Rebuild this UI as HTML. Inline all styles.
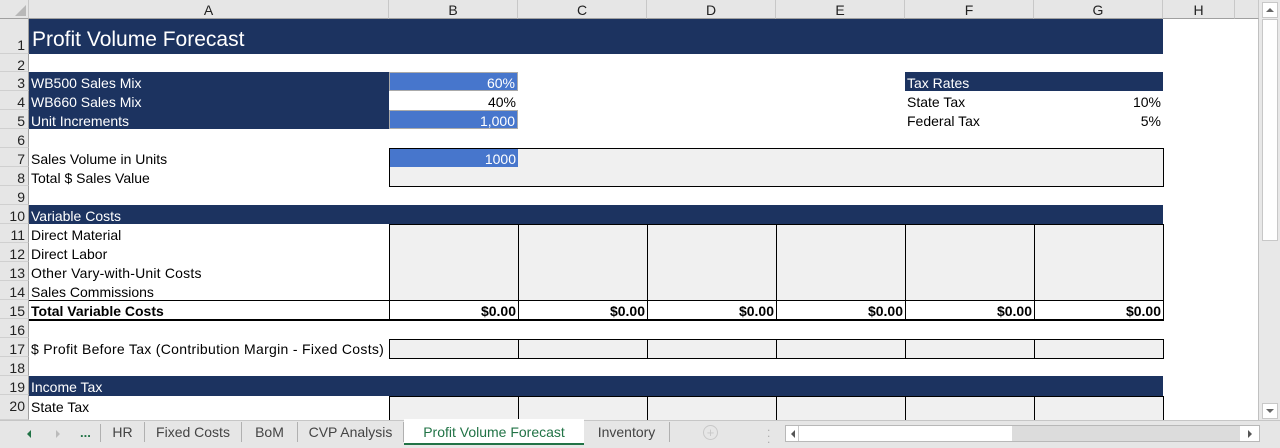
<!DOCTYPE html>
<html><head><meta charset="utf-8"><style>
*{margin:0;padding:0;box-sizing:border-box}
body{width:1280px;height:448px;overflow:hidden;background:#fff;font-family:"Liberation Sans","Noto Sans CJK SC",sans-serif;position:relative;font-size:14px;color:#000}
div{position:absolute}
.ch{top:0;height:19px;background:#e6e6e6;border-right:1px solid #c8c8c8;border-bottom:1px solid #a0a0a0;text-align:center;line-height:20px;font-size:14px;color:#222}
.rh{left:0;width:29px;background:#e6e6e6;border-bottom:1px solid #d0d0d0;border-right:1px solid #a0a0a0;text-align:right;padding-right:3px;font-size:14px;color:#222;line-height:22px;overflow:hidden}
.t{height:19px;line-height:23px;white-space:nowrap;padding:0 2px}
.dk{background:#1c3360;color:#fff}
.bl{background:#4776cc;color:#fff;text-align:right}
.r{text-align:right}
.g{background:#f0f0f0;border:1px solid #000}
.tab{top:420px;height:26px;line-height:25px;font-size:14px;color:#444;border-right:1px solid #b0b0b0}
</style></head><body>
<div class="ch" style="left:0;width:29px;"></div>
<div style="left:15px;top:5px;width:0;height:0;border-left:11px solid transparent;border-bottom:11px solid #b8b8b8"></div>
<div class="ch" style="left:29px;width:360px">A</div>
<div class="ch" style="left:389px;width:129px">B</div>
<div class="ch" style="left:518px;width:129px">C</div>
<div class="ch" style="left:647px;width:129px">D</div>
<div class="ch" style="left:776px;width:129px">E</div>
<div class="ch" style="left:905px;width:129px">F</div>
<div class="ch" style="left:1034px;width:129px">G</div>
<div class="ch" style="left:1163px;width:72px">H</div>
<div class="ch" style="left:1235px;width:24px"></div>
<div class="rh" style="top:19px;height:35px;line-height:52px">1</div>
<div class="rh" style="top:54px;height:18px">2</div>
<div class="rh" style="top:72px;height:19px">3</div>
<div class="rh" style="top:91px;height:19px">4</div>
<div class="rh" style="top:110px;height:19px">5</div>
<div class="rh" style="top:129px;height:19px">6</div>
<div class="rh" style="top:148px;height:19px">7</div>
<div class="rh" style="top:167px;height:19px">8</div>
<div class="rh" style="top:186px;height:19px">9</div>
<div class="rh" style="top:205px;height:19px">10</div>
<div class="rh" style="top:224px;height:19px">11</div>
<div class="rh" style="top:243px;height:19px">12</div>
<div class="rh" style="top:262px;height:19px">13</div>
<div class="rh" style="top:281px;height:19px">14</div>
<div class="rh" style="top:300px;height:19px">15</div>
<div class="rh" style="top:319px;height:19px">16</div>
<div class="rh" style="top:338px;height:19px">17</div>
<div class="rh" style="top:357px;height:19px">18</div>
<div class="rh" style="top:376px;height:19px">19</div>
<div class="rh" style="top:395px;height:25px">20</div>

<div class="dk" style="left:29px;top:19px;width:1134px;height:35px;font-size:21px;line-height:41px;padding-left:3px">Profit Volume Forecast</div>
<div class="dk" style="left:29px;top:72px;width:360px;height:57px"></div>
<div class="t" style="left:29px;top:72px;color:#fff">WB500 Sales Mix</div>
<div class="t" style="left:29px;top:91px;color:#fff">WB660 Sales Mix</div>
<div class="t" style="left:29px;top:110px;color:#fff">Unit Increments</div>
<div class="t bl" style="left:389px;top:72px;width:129px;border:1px solid #aaa;line-height:21px">60%</div>
<div class="t r" style="left:389px;top:91px;width:129px">40%</div>
<div class="t bl" style="left:389px;top:110px;width:129px;border:1px solid #aaa;line-height:21px">1,000</div>
<div class="t dk" style="left:905px;top:72px;width:258px">Tax Rates</div>
<div class="t" style="left:905px;top:91px">State Tax</div>
<div class="t r" style="left:1034px;top:91px;width:129px">10%</div>
<div class="t" style="left:905px;top:110px">Federal Tax</div>
<div class="t r" style="left:1034px;top:110px;width:129px">5%</div>
<div class="t" style="left:29px;top:148px">Sales Volume in Units</div>
<div class="t" style="left:29px;top:167px">Total $ Sales Value</div>
<div class="g" style="left:389px;top:148px;width:775px;height:39px"></div>
<div class="t bl" style="left:390px;top:149px;width:128px;height:18px;line-height:21px">1000</div>
<div class="t dk" style="left:29px;top:205px;width:1134px">Variable Costs</div>
<div class="t" style="left:29px;top:224px">Direct Material</div>
<div class="t" style="left:29px;top:243px">Direct Labor</div>
<div class="t" style="left:29px;top:262px;letter-spacing:0.2px">Other Vary-with-Unit Costs</div>
<div class="t" style="left:29px;top:281px">Sales Commissions</div>
<div class="t" style="left:29px;top:300px;font-weight:bold">Total Variable Costs</div>
<div style="left:29px;top:300px;width:360px;height:1px;background:#000"></div>
<div style="left:29px;top:319px;width:1135px;height:2px;background:#000"></div>
<div class="g" style="left:389px;top:224px;width:130px;height:77px"></div>
<div class="g" style="left:518px;top:224px;width:130px;height:77px"></div>
<div class="g" style="left:647px;top:224px;width:130px;height:77px"></div>
<div class="g" style="left:776px;top:224px;width:130px;height:77px"></div>
<div class="g" style="left:905px;top:224px;width:130px;height:77px"></div>
<div class="g" style="left:1034px;top:224px;width:130px;height:77px"></div>
<div class="t r" style="left:389px;top:300px;width:130px;border-left:1px solid #000;border-right:1px solid #000;font-weight:bold">$0.00</div>
<div class="t r" style="left:518px;top:300px;width:130px;border-left:1px solid #000;border-right:1px solid #000;font-weight:bold">$0.00</div>
<div class="t r" style="left:647px;top:300px;width:130px;border-left:1px solid #000;border-right:1px solid #000;font-weight:bold">$0.00</div>
<div class="t r" style="left:776px;top:300px;width:130px;border-left:1px solid #000;border-right:1px solid #000;font-weight:bold">$0.00</div>
<div class="t r" style="left:905px;top:300px;width:130px;border-left:1px solid #000;border-right:1px solid #000;font-weight:bold">$0.00</div>
<div class="t r" style="left:1034px;top:300px;width:130px;border-left:1px solid #000;border-right:1px solid #000;font-weight:bold">$0.00</div>
<div class="t" style="left:29px;top:338px;letter-spacing:0.3px">$ Profit Before Tax (Contribution Margin - Fixed Costs)</div>
<div class="g" style="left:389px;top:339px;width:130px;height:20px"></div>
<div class="g" style="left:518px;top:339px;width:130px;height:20px"></div>
<div class="g" style="left:647px;top:339px;width:130px;height:20px"></div>
<div class="g" style="left:776px;top:339px;width:130px;height:20px"></div>
<div class="g" style="left:905px;top:339px;width:130px;height:20px"></div>
<div class="g" style="left:1034px;top:339px;width:130px;height:20px"></div>
<div class="t dk" style="left:29px;top:376px;width:1134px;height:20px">Income Tax</div>
<div class="t" style="left:29px;top:396px">State Tax</div>
<div class="g" style="left:389px;top:396px;width:130px;height:30px"></div>
<div class="g" style="left:518px;top:396px;width:130px;height:30px"></div>
<div class="g" style="left:647px;top:396px;width:130px;height:30px"></div>
<div class="g" style="left:776px;top:396px;width:130px;height:30px"></div>
<div class="g" style="left:905px;top:396px;width:130px;height:30px"></div>
<div class="g" style="left:1034px;top:396px;width:130px;height:30px"></div>
<div style="left:1258px;top:19px;width:1px;height:401px;background:#c0c0c0"></div>
<div style="left:1259px;top:0;width:21px;height:420px;background:#e8e8e8"></div>
<div style="left:1262px;top:2px;width:16px;height:16px;background:#fff;border:1px solid #c8c8c8"></div>
<div style="left:1266px;top:8px;width:0;height:0;border-left:4px solid transparent;border-right:4px solid transparent;border-bottom:4px solid #666"></div>
<div style="left:1262px;top:19px;width:16px;height:222px;background:#fff;border:1px solid #c8c8c8"></div>
<div style="left:1262px;top:403px;width:16px;height:16px;background:#fff;border:1px solid #c8c8c8"></div>
<div style="left:1266px;top:409px;width:0;height:0;border-left:4px solid transparent;border-right:4px solid transparent;border-top:4px solid #666"></div>
<div style="left:0;top:420px;width:1280px;height:28px;background:#e6e6e6;border-top:1px solid #c6c6c6"></div>
<div style="left:27px;top:430px;width:0;height:0;border-top:4px solid transparent;border-bottom:4px solid transparent;border-right:4px solid #217346"></div>
<div style="left:56px;top:430px;width:0;height:0;border-top:4px solid transparent;border-bottom:4px solid transparent;border-left:4px solid #bbb"></div>
<div style="left:80px;top:422px;color:#217346;font-weight:bold;font-size:13px;line-height:22px">...</div>
<div class="tab" style="left:100px;width:1px;top:424px;height:18px;background:#b0b0b0;border:none"></div>
<div class="tab" style="left:101px;width:44px;text-align:center;top:422px;height:20px;line-height:20px">HR</div>
<div class="tab" style="left:145px;width:97px;text-align:center;top:422px;height:20px;line-height:20px">Fixed Costs</div>
<div class="tab" style="left:242px;width:56px;text-align:center;top:422px;height:20px;line-height:20px">BoM</div>
<div class="tab" style="left:298px;width:106px;text-align:center;top:422px;height:20px;line-height:20px">CVP Analysis</div>
<div style="left:404px;top:419px;width:180px;height:26px;background:#fff;border-bottom:2px solid #217346;color:#217346;text-align:center;line-height:26px;font-size:14px">Profit Volume Forecast</div>
<div class="tab" style="left:584px;width:86px;text-align:center;top:422px;height:20px;line-height:20px">Inventory</div>
<div style="left:703px;top:425px;width:15px;height:15px;border:1px solid #c8c8c8;border-radius:50%;color:#c8c8c8;text-align:center;line-height:13px;font-size:13px">+</div>
<div style="left:767px;top:424px;color:#aaa;font-size:12px;line-height:6px;width:4px">.<br>.<br>.</div>
<div style="left:785px;top:425px;width:475px;height:17px;background:#fff;border:1px solid #b8b8b8"></div>
<div style="left:798px;top:426px;width:1px;height:15px;background:#c8c8c8"></div>
<div style="left:791px;top:430px;width:0;height:0;border-top:4px solid transparent;border-bottom:4px solid transparent;border-right:4px solid #555"></div>
<div style="left:1012px;top:426px;width:228px;height:15px;background:#dcdcdc"></div>
<div style="left:1248px;top:430px;width:0;height:0;border-top:4px solid transparent;border-bottom:4px solid transparent;border-left:4px solid #555"></div>
</body></html>
